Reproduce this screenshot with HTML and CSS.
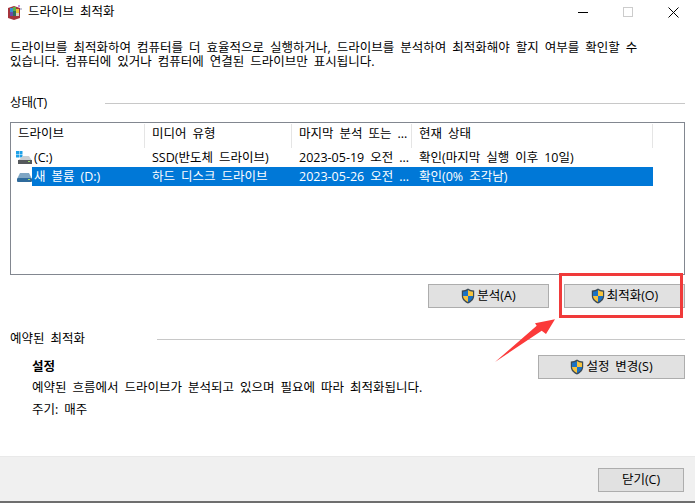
FILE: index.html
```html
<!DOCTYPE html>
<html lang="ko">
<head>
<meta charset="utf-8">
<title>드라이브 최적화</title>
<link rel="stylesheet" href="styles.css">
</head>
<body>
<svg class="defs" width="0" height="0" aria-hidden="true">
  <symbol id="shield" viewBox="0 0 14 16">
    <path d="M7 .5C5.300 1.800 3 2.400.8 2.500v5.200c0 3.600 2.600 6.200 6.200 7.800 3.600-1.600 6.200-4.200 6.200-7.800V2.500C11 2.400 8.700 1.800 7 .5z" fill="#3c4a55"/>
    <path d="M7 2v6H2V3.700C3.900 3.500 5.500 3 7 2z" fill="#1b72c4"/>
    <path d="M7 2c1.500 1 3.100 1.500 5 1.700V8H7z" fill="#f6c33d"/>
    <path d="M2 8h5v6C4.300 12.700 2.200 10.900 2 8z" fill="#f6c33d"/>
    <path d="M7 8h5c-.2 2.900-2.300 4.700-5 6z" fill="#1b72c4"/>
  </symbol>
</svg>
<div class="window">
  <header class="titlebar">
    <svg class="app-icon" width="15" height="16" viewBox="0 0 15 16" aria-hidden="true">
      <path d="M1 4l6-2 6 2v10l-6 2-6-2z" fill="#a5343c"/>
      <rect x="3" y="4" width="3" height="4" fill="#3a8fd0"/>
      <rect x="6" y="3" width="3" height="4" fill="#5cb04a"/>
      <rect x="9" y="5" width="3" height="4" fill="#e6c23a"/>
      <rect x="3" y="8" width="3" height="4" fill="#6a4aa8"/>
      <rect x="6" y="7" width="3" height="5" fill="#2f6f5a"/>
      <rect x="9" y="9" width="3" height="3" fill="#d8d0c0"/>
      <rect x="11" y="1" width="2" height="2" fill="#c79ae0"/>
      <rect x="13" y="4" width="2" height="2" fill="#c5c5d5"/>
    </svg>
    <span class="title">드라이브 최적화</span>
    <div class="controls">
      <svg class="ctl" width="11" height="11" viewBox="0 0 11 11" aria-hidden="true"><path d="M0 5.500h10" stroke="#000" fill="none"/></svg>
      <svg class="ctl" width="11" height="11" viewBox="0 0 11 11" aria-hidden="true"><rect x=".5" y=".5" width="9" height="9" stroke="#cccccc" fill="none"/></svg>
      <svg class="ctl" width="11" height="11" viewBox="0 0 11 11" aria-hidden="true"><path d="M.5.500l10 10M10.500.500l-10 10" stroke="#000" fill="none"/></svg>
    </div>
  </header>

  <main class="content">
    <p class="intro">드라이브를 최적화하여 컴퓨터를 더 효율적으로 실행하거나, 드라이브를 분석하여 최적화해야 할지 여부를 확인할 수<br>있습니다. 컴퓨터에 있거나 컴퓨터에 연결된 드라이브만 표시됩니다.</p>

    <div class="group-head status-head">
      <span>상태(T)</span>
      <i class="rule rule-status"></i>
    </div>

    <section class="list">
      <div class="row head">
        <span class="h h1">드라이브</span>
        <span class="h h2">미디어 유형</span>
        <span class="h h3">마지막 분석 또는 ...</span>
        <span class="h h4">현재 상태</span>
      </div>
      <div class="row item">
        <svg class="drive" width="16" height="14" viewBox="0 0 16 14" aria-hidden="true">
          <rect x="0" y="0" width="3" height="3" fill="#1ea1e8"/><rect x="3.500" y="0" width="3" height="3" fill="#1ea1e8"/>
          <rect x="0" y="3.500" width="3" height="3" fill="#1ea1e8"/><rect x="3.500" y="3.500" width="3" height="3" fill="#1ea1e8"/>
          <path d="M7 5h6l2.500 4H2.500z" fill="#c9ced2"/>
          <rect x="2" y="9" width="14" height="4" fill="#55595c"/>
          <rect x="12" y="10" width="2" height="1" fill="#9fe06a"/>
        </svg>
        <span class="c c1">(C:)</span>
        <span class="c c2">SSD(반도체 드라이브)</span>
        <span class="c c3">2023-05-19 오전 ...</span>
        <span class="c c4">확인(마지막 실행 이후 10일)</span>
      </div>
      <div class="row item selected">
        <svg class="drive" width="16" height="14" viewBox="0 0 16 14" aria-hidden="true">
          <path d="M4 3h9l2.500 5H1.500z" fill="#7fa6c4"/>
          <rect x="1" y="8" width="15" height="4" rx="1" fill="#2f6b9c"/>
          <rect x="12" y="9" width="2" height="1" fill="#9fe06a"/>
        </svg>
        <span class="c c1">새 볼륨 (D:)</span>
        <span class="c c2">하드 디스크 드라이브</span>
        <span class="c c3">2023-05-26 오전 ...</span>
        <span class="c c4">확인(0% 조각남)</span>
      </div>
    </section>

    <div class="actions">
      <button class="btn btn-wide" type="button"><svg class="shield" width="14" height="16"><use href="#shield"/></svg>분석(A)</button>
      <button class="btn btn-wide" type="button"><svg class="shield" width="14" height="16"><use href="#shield"/></svg>최적화(O)</button>
    </div>

    <div class="group-head sched-head">
      <span>예약된 최적화</span>
      <i class="rule rule-sched"></i>
    </div>

    <section class="schedule">
      <div class="sched-text">
        <strong class="sched-title">설정</strong>
        <p class="sched-line">예약된 흐름에서 드라이브가 분석되고 있으며 필요에 따라 최적화됩니다.</p>
        <p class="sched-line freq">주기: 매주</p>
      </div>
      <button class="btn btn-change" type="button"><svg class="shield" width="14" height="16"><use href="#shield"/></svg>설정 변경(S)</button>
    </section>
  </main>

  <footer class="footer">
    <button class="btn btn-close" type="button">닫기(C)</button>
  </footer>

  <div class="highlight"></div>
  <svg class="arrow" width="70" height="50" viewBox="0 0 70 50" aria-hidden="true">
    <path d="M0 44L41.700 7.700 40 5.300 60 1.300 51 16 46.700 12.700z" fill="#fb3a3a"/>
  </svg>
</div>
</body>
</html>
```

FILE: styles.css
```css
* { box-sizing: border-box; }
html, body { margin: 0; padding: 0; }
body {
  font-family: "Open Sans", "Noto Sans CJK KR", sans-serif;
  font-size: 12.5px;
  line-height: 14px;
  word-spacing: 2.75px;
  color: #000;
  background: #fff;
}
.defs { position: absolute; }
.window {
  position: relative;
  width: 695px;
  height: 503px;
  display: flex;
  flex-direction: column;
  background: #fff;
  overflow: hidden;
}
.titlebar {
  height: 24px;
  display: flex;
  align-items: center;
  padding-left: 7px;
  flex: none;
}
.app-icon { flex: none; margin-right: 6px; }
.title { line-height: 18px; }
.controls {
  margin-left: auto;
  display: flex;
  gap: 34px;
  padding-right: 16px;
}
.ctl { display: block; }
.content {
  flex: 1;
  display: flex;
  flex-direction: column;
  padding: 17px 10px 0;
  min-height: 0;
}
.intro { margin: 0; }
.group-head { display: flex; align-items: center; }
.status-head { margin-top: 25px; height: 18px; }
.rule { display: block; height: 1px; background: #c8c8c8; flex: 1; }
.rule-status { margin-left: 58px; }
.rule-sched { margin-left: 72px; }
.list {
  margin-top: 10px;
  height: 153px;
  width: 675px;
  border: 1px solid #828790;
  padding-top: 1px;
}
.row {
  display: grid;
  grid-template-columns: 21px 113px 147px 120px 241px;
  align-items: center;
}
.head { height: 24px; }
.h {
  height: 24px;
  line-height: 20px;
  padding-left: 7px;
  border-right: 1px solid #e5e5e5;
}
.h1 { grid-column: 1 / span 2; }
.item { height: 19px; }
.drive { margin-left: 5px; display: block; }
.c {
  height: 19px;
  line-height: 19px;
  padding-left: 2px;
  white-space: nowrap;
  overflow: hidden;
}
.c2, .c3, .c4 { padding-left: 7px; }
.selected .c { background: #0078d7; color: #fff; }
.actions {
  margin-top: 9px;
  display: flex;
  justify-content: flex-end;
  gap: 15px;
}
.btn {
  font: inherit;
  word-spacing: inherit;
  color: #000;
  background: #e1e1e1;
  border: 1px solid #adadad;
  height: 24px;
  padding: 0;
  display: flex;
  align-items: center;
  justify-content: center;
  gap: 2px;
}
.btn-wide { width: 121px; }
.shield { display: block; flex: none; }
.sched-head { margin-top: 22px; height: 18px; }
.schedule {
  display: flex;
  justify-content: space-between;
  align-items: flex-start;
  padding-left: 22px;
}
.sched-title { display: block; margin-top: 10px; line-height: 18px; font-weight: 700; }
.sched-line { margin: 3px 0 0; line-height: 18px; }
.freq { margin-top: 4px; }
.btn-change { width: 147px; margin-top: 7px; }
.footer {
  flex: none;
  height: 47px;
  background: #f0f0f0;
  border-top: 1px solid #e9e9e9;
  border-bottom: 2px solid #6e6e6e;
  display: flex;
  justify-content: flex-end;
  align-items: flex-start;
  padding: 11px 11px 0 0;
}
.btn-close { width: 86px; }
.highlight {
  position: absolute;
  left: 559px;
  top: 273px;
  width: 124px;
  height: 45px;
  border: 3px solid #f03a3a;
}
.arrow {
  position: absolute;
  left: 495px;
  top: 318px;
}
```
